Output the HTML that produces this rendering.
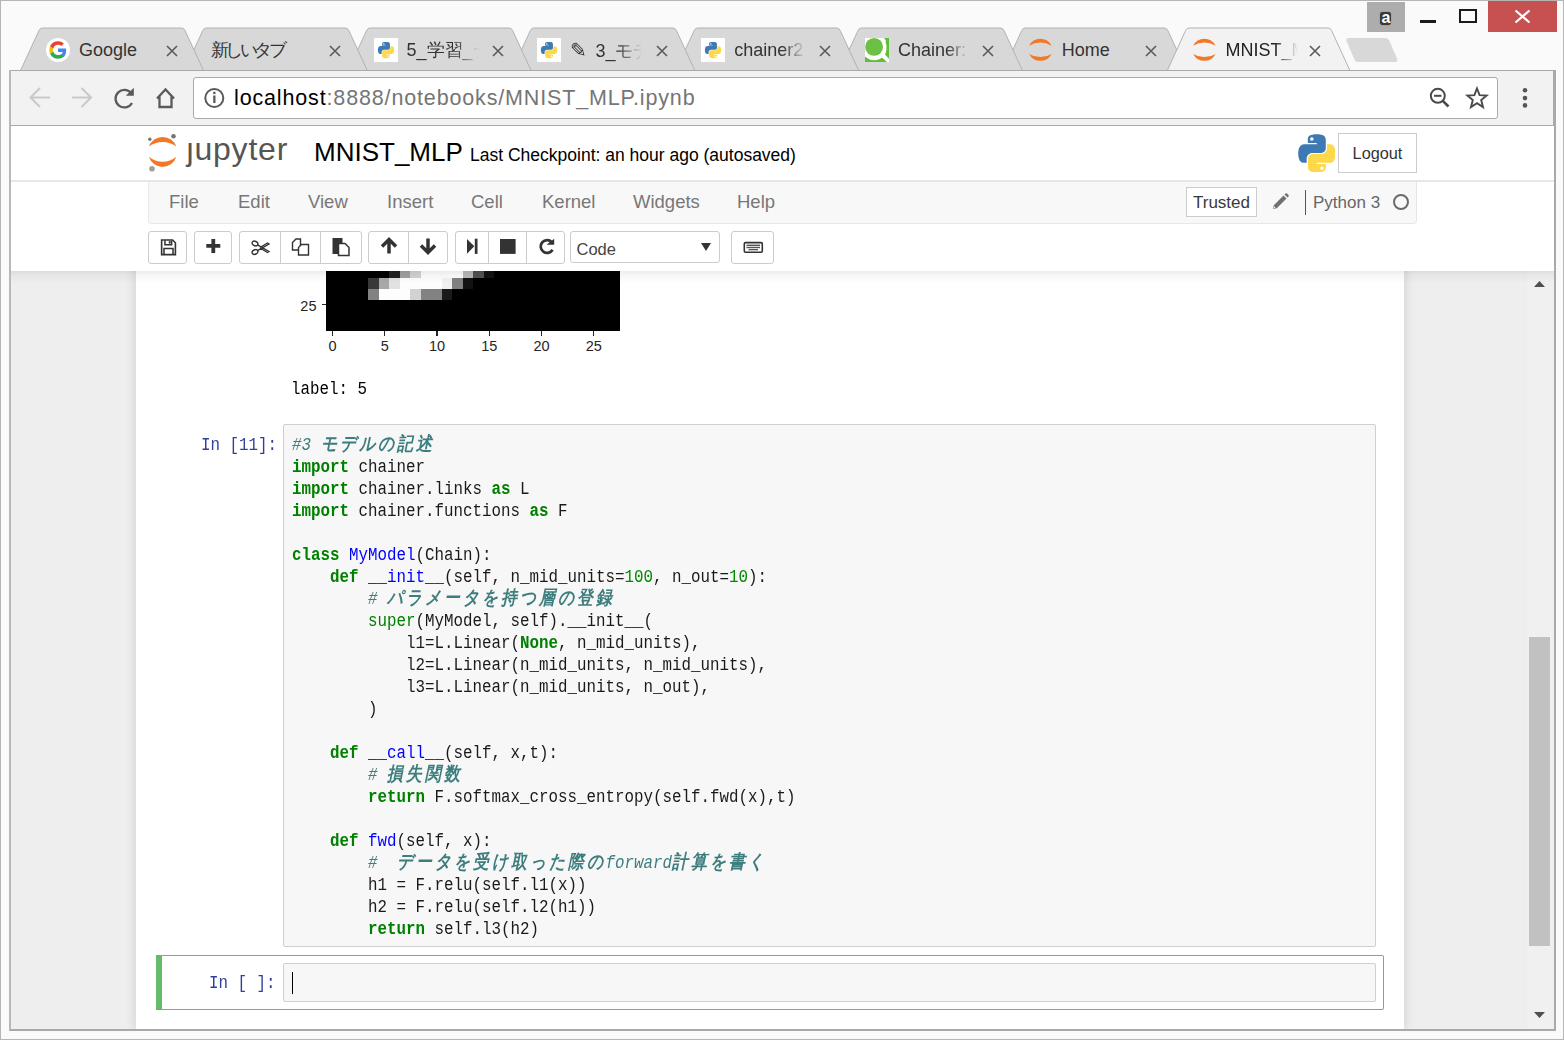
<!DOCTYPE html><html><head><meta charset="utf-8"><style>
*{box-sizing:border-box}
html,body{margin:0;padding:0}
body{width:1564px;height:1040px;overflow:hidden;position:relative;background:#fafafa;font-family:"Liberation Sans",sans-serif}
.abs{position:absolute}
.ttl{position:absolute;top:36px;height:28px;line-height:28px;font-size:18px;color:#333;white-space:nowrap;overflow:hidden}
.fade{-webkit-mask-image:linear-gradient(to right,#000 calc(100% - 24px),transparent 100%);mask-image:linear-gradient(to right,#000 calc(100% - 24px),transparent 100%)}
.fav{position:absolute;top:38px;width:24px;height:24px}
</style></head><body>
<div class="abs" style="left:1367px;top:2px;width:38px;height:30px;background:#adadad"></div>
<div class="abs" style="left:1379.5px;top:12px;width:11.5px;height:12.8px;background:#3a3a3a;border-radius:3px;box-shadow:0 0 1px #444"></div>
<div class="abs" style="left:1367px;top:2px;width:38px;height:30px;line-height:32px;text-align:center;color:#fff;font-size:16px;font-weight:bold">a</div>
<div class="abs" style="left:1420px;top:20px;width:16px;height:3px;background:#1a1a1a"></div>
<div class="abs" style="left:1459px;top:9px;width:18px;height:14px;border:2px solid #1a1a1a"></div>
<div class="abs" style="left:1488px;top:1px;width:69px;height:31px;background:#c75050"></div>
<svg class="abs" style="left:1488px;top:1px" width="69" height="31"><path d="M27.5 9.5 L41.5 21.5 M41.5 9.5 L27.5 21.5" stroke="#fff" stroke-width="2.2"/></svg>
<svg class="abs" style="left:0;top:0" width="1564" height="72"><path d="M1003.3000000000001 70.5 L1021.8000000000001 30.5 Q1022.8000000000001 28 1025.3000000000002 28 L1164.3000000000002 28 Q1166.8000000000002 28 1167.8000000000002 30.5 L1186.3000000000002 70.5Z" fill="#d8d8d8" stroke="#b2b2b2" stroke-width="1"/><path d="M839.5 70.5 L858.0 30.5 Q859.0 28 861.5 28 L1000.5 28 Q1003.0 28 1004.0 30.5 L1022.5 70.5Z" fill="#d8d8d8" stroke="#b2b2b2" stroke-width="1"/><path d="M675.7 70.5 L694.2 30.5 Q695.2 28 697.7 28 L836.7 28 Q839.2 28 840.2 30.5 L858.7 70.5Z" fill="#d8d8d8" stroke="#b2b2b2" stroke-width="1"/><path d="M511.9000000000001 70.5 L530.4000000000001 30.5 Q531.4000000000001 28 533.9000000000001 28 L672.9000000000001 28 Q675.4000000000001 28 676.4000000000001 30.5 L694.9000000000001 70.5Z" fill="#d8d8d8" stroke="#b2b2b2" stroke-width="1"/><path d="M348.1 70.5 L366.6 30.5 Q367.6 28 370.1 28 L509.1 28 Q511.6 28 512.6 30.5 L531.1 70.5Z" fill="#d8d8d8" stroke="#b2b2b2" stroke-width="1"/><path d="M184.3 70.5 L202.8 30.5 Q203.8 28 206.3 28 L345.3 28 Q347.8 28 348.8 30.5 L367.3 70.5Z" fill="#d8d8d8" stroke="#b2b2b2" stroke-width="1"/><path d="M20.5 70.5 L39.0 30.5 Q40.0 28 42.5 28 L181.5 28 Q184.0 28 185.0 30.5 L203.5 70.5Z" fill="#d8d8d8" stroke="#b2b2b2" stroke-width="1"/><path d="M1349 38 L1385 38 Q1388 38 1389.5 41 L1397 58.5 Q1398.5 62 1395 62 L1358 62 Q1355.5 62 1354.5 59.5 L1346.5 41 Q1345.5 38 1349 38Z" fill="#d8d8d8"/><path d="M1167.1000000000001 71 L1185.6000000000001 30.5 Q1186.6000000000001 28 1189.1000000000001 28 L1328.1000000000001 28 Q1330.6000000000001 28 1331.6000000000001 30.5 L1350.1000000000001 71" fill="#f2f2f2" stroke="#b2b2b2" stroke-width="1"/></svg>
<div class="fav" style="left:46.0px"><svg width="24" height="24" viewBox="0 0 24 24"><circle cx="12" cy="12" r="12" fill="#fff"/><g transform="translate(12 12) scale(1.45) translate(-12 -12)">
<path d="M17.6 12.2c0-.5 0-.9-.1-1.3H12v2.5h3.2c-.1.8-.6 1.5-1.2 1.9v1.6h2c1.1-1.1 1.6-2.7 1.6-4.7z" fill="#4285f4"/>
<path d="M12 18c1.6 0 3-.5 4-1.5l-2-1.6c-.5.4-1.2.6-2 .6-1.6 0-2.9-1-3.3-2.4H6.6v1.6C7.6 16.7 9.6 18 12 18z" fill="#34a853"/>
<path d="M8.7 13.1c-.1-.4-.2-.7-.2-1.1s.1-.8.2-1.1V9.3H6.6C6.2 10.1 6 11 6 12s.2 1.9.6 2.7l2.1-1.6z" fill="#fbbc05"/>
<path d="M12 8.4c.9 0 1.7.3 2.3.9l1.7-1.7C15 6.6 13.6 6 12 6 9.6 6 7.6 7.3 6.6 9.3l2.1 1.6c.4-1.4 1.7-2.5 3.3-2.5z" fill="#ea4335"/></g></svg></div>
<div class="ttl" style="left:79.0px;width:72.0px;color:#333">Google</div>
<div class="abs" style="left:166.00px;top:43px"><svg width="12" height="12" viewBox="0 0 12 12"><path d="M1 1 L11 11 M11 1 L1 11" stroke="#5a5a5a" stroke-width="1.6"/></svg></div>
<div class="ttl" style="left:210.8px;width:104.0px;color:#333"><span style="letter-spacing:-3.5px">新しいタブ</span></div>
<div class="abs" style="left:329.23px;top:43px"><svg width="12" height="12" viewBox="0 0 12 12"><path d="M1 1 L11 11 M11 1 L1 11" stroke="#5a5a5a" stroke-width="1.6"/></svg></div>
<div class="fav" style="left:373.6px"><svg width="24" height="24" viewBox="0 0 24 24"><rect width="24" height="24" fill="#fff"/><g transform="translate(3.8 3.8) scale(0.149)"><path d="M54.9 0.9c-4.6 0-9 .4-12.8 1.1C30.9 4 28.8 8.1 28.8 15.7v10h26.4v3.3H18.9c-7.7 0-14.4 4.6-16.5 13.3-2.4 10-2.5 16.3 0 26.7 1.9 7.8 6.3 13.3 14 13.3h9.1v-12c0-8.7 7.5-16.3 16.5-16.3h26.3c7.3 0 13.2-6 13.2-13.3V15.7c0-7.1-6-12.5-13.2-13.700C64 1.2 59.5.9 54.9.9zM40.6 9c2.7 0 5 2.3 5 5 0 2.7-2.3 5-5 5-2.8 0-5-2.2-5-5 0-2.8 2.2-5 5-5z" fill="#3d7ab3"/>
<path d="M85.1 29v11.7c0 9-7.7 16.6-16.5 16.6H42.3c-7.2 0-13.2 6.2-13.2 13.4v25c0 7.1 6.2 11.3 13.2 13.4 8.3 2.4 16.3 2.9 26.3 0 6.6-1.9 13.2-5.8 13.2-13.400v-10H55.3v-3.3h39.6c7.7 0 10.5-5.300 13.2-13.300 2.8-8.2 2.7-16.1 0-26.7-1.9-7.6-5.5-13.3-13.2-13.3H85.1zM70.3 92.5c2.7 0 5 2.2 5 5 0 2.8-2.3 5-5 5-2.8 0-5-2.3-5-5 0-2.8 2.2-5 5-5z" fill="#fdd84a"/></g></svg></div>
<div class="ttl fade" style="left:406.6px;width:72.0px;color:#333">5_学習_データ</div>
<div class="abs" style="left:492.46px;top:43px"><svg width="12" height="12" viewBox="0 0 12 12"><path d="M1 1 L11 11 M11 1 L1 11" stroke="#5a5a5a" stroke-width="1.6"/></svg></div>
<div class="fav" style="left:537.4000000000001px"><svg width="24" height="24" viewBox="0 0 24 24"><rect width="24" height="24" fill="#fff"/><g transform="translate(3.8 3.8) scale(0.149)"><path d="M54.9 0.9c-4.6 0-9 .4-12.8 1.1C30.9 4 28.8 8.1 28.8 15.7v10h26.4v3.3H18.9c-7.7 0-14.4 4.6-16.5 13.3-2.4 10-2.5 16.3 0 26.7 1.9 7.8 6.3 13.3 14 13.3h9.1v-12c0-8.7 7.5-16.3 16.5-16.3h26.3c7.3 0 13.2-6 13.2-13.3V15.7c0-7.1-6-12.5-13.2-13.700C64 1.2 59.5.9 54.9.9zM40.6 9c2.7 0 5 2.3 5 5 0 2.7-2.3 5-5 5-2.8 0-5-2.2-5-5 0-2.8 2.2-5 5-5z" fill="#3d7ab3"/>
<path d="M85.1 29v11.7c0 9-7.7 16.6-16.5 16.6H42.3c-7.2 0-13.2 6.2-13.2 13.4v25c0 7.1 6.2 11.3 13.2 13.4 8.3 2.4 16.3 2.9 26.3 0 6.6-1.9 13.2-5.8 13.2-13.400v-10H55.3v-3.3h39.6c7.7 0 10.5-5.300 13.2-13.300 2.8-8.2 2.7-16.1 0-26.7-1.9-7.6-5.5-13.3-13.2-13.3H85.1zM70.3 92.5c2.7 0 5 2.2 5 5 0 2.8-2.3 5-5 5-2.8 0-5-2.3-5-5 0-2.8 2.2-5 5-5z" fill="#fdd84a"/></g></svg></div>
<div class="ttl fade" style="left:570.4000000000001px;width:72.0px;color:#333"><span style="font-size:20px;margin-right:3px">✎</span> 3_モデル</div>
<div class="abs" style="left:655.69px;top:43px"><svg width="12" height="12" viewBox="0 0 12 12"><path d="M1 1 L11 11 M11 1 L1 11" stroke="#5a5a5a" stroke-width="1.6"/></svg></div>
<div class="fav" style="left:701.2px"><svg width="24" height="24" viewBox="0 0 24 24"><rect width="24" height="24" fill="#fff"/><g transform="translate(3.8 3.8) scale(0.149)"><path d="M54.9 0.9c-4.6 0-9 .4-12.8 1.1C30.9 4 28.8 8.1 28.8 15.7v10h26.4v3.3H18.9c-7.7 0-14.4 4.6-16.5 13.3-2.4 10-2.5 16.3 0 26.7 1.9 7.8 6.3 13.3 14 13.3h9.1v-12c0-8.7 7.5-16.3 16.5-16.3h26.3c7.3 0 13.2-6 13.2-13.3V15.7c0-7.1-6-12.5-13.2-13.700C64 1.2 59.5.9 54.9.9zM40.6 9c2.7 0 5 2.3 5 5 0 2.7-2.3 5-5 5-2.8 0-5-2.2-5-5 0-2.8 2.2-5 5-5z" fill="#3d7ab3"/>
<path d="M85.1 29v11.7c0 9-7.7 16.6-16.5 16.6H42.3c-7.2 0-13.2 6.2-13.2 13.4v25c0 7.1 6.2 11.3 13.2 13.4 8.3 2.4 16.3 2.9 26.3 0 6.6-1.9 13.2-5.8 13.2-13.400v-10H55.3v-3.3h39.6c7.7 0 10.5-5.300 13.2-13.300 2.8-8.2 2.7-16.1 0-26.7-1.9-7.6-5.5-13.3-13.2-13.3H85.1zM70.3 92.5c2.7 0 5 2.2 5 5 0 2.8-2.3 5-5 5-2.8 0-5-2.3-5-5 0-2.8 2.2-5 5-5z" fill="#fdd84a"/></g></svg></div>
<div class="ttl fade" style="left:734.2px;width:72.0px;color:#333">chainer2</div>
<div class="abs" style="left:818.92px;top:43px"><svg width="12" height="12" viewBox="0 0 12 12"><path d="M1 1 L11 11 M11 1 L1 11" stroke="#5a5a5a" stroke-width="1.6"/></svg></div>
<div class="fav" style="left:865.0px"><svg width="24" height="24" viewBox="0 0 24 24"><defs><clipPath id="qc"><rect width="24" height="24"/></clipPath></defs><g clip-path="url(#qc)"><rect width="24" height="24" fill="#64bd38"/>
<circle cx="9.1" cy="8.9" r="13.3" fill="#fff"/><circle cx="9.1" cy="8.9" r="8.9" fill="#6cc044"/><path d="M16 18.5 L24 26 L26.5 23.5 L19 15.5Z" fill="#fff"/><path d="M20.5 4 Q22.5 9 20.5 16 L24 20 V0Z" fill="#64bd38"/></g></svg></div>
<div class="ttl fade" style="left:898.0px;width:72.0px;color:#333">Chainer: </div>
<div class="abs" style="left:982.15px;top:43px"><svg width="12" height="12" viewBox="0 0 12 12"><path d="M1 1 L11 11 M11 1 L1 11" stroke="#5a5a5a" stroke-width="1.6"/></svg></div>
<div class="fav" style="left:1028.8000000000002px"><svg width="24" height="24" viewBox="0 0 24 24">
<path d="M0.2 7.7 A12.4 12.4 0 0 1 22.5 7.7 A21 21 0 0 0 0.2 7.7Z" fill="#f37726"/>
<path d="M0.2 15.9 A12.4 12.4 0 0 0 22.5 15.9 A21 21 0 0 1 0.2 15.9Z" fill="#f37726"/></svg></div>
<div class="ttl" style="left:1061.8000000000002px;width:72.0px;color:#333">Home</div>
<div class="abs" style="left:1145.38px;top:43px"><svg width="12" height="12" viewBox="0 0 12 12"><path d="M1 1 L11 11 M11 1 L1 11" stroke="#5a5a5a" stroke-width="1.6"/></svg></div>
<div class="fav" style="left:1192.6000000000001px"><svg width="24" height="24" viewBox="0 0 24 24">
<path d="M0.2 7.7 A12.4 12.4 0 0 1 22.5 7.7 A21 21 0 0 0 0.2 7.7Z" fill="#f37726"/>
<path d="M0.2 15.9 A12.4 12.4 0 0 0 22.5 15.9 A21 21 0 0 1 0.2 15.9Z" fill="#f37726"/></svg></div>
<div class="ttl fade" style="left:1225.6000000000001px;width:72.0px;color:#222">MNIST_MLP</div>
<div class="abs" style="left:1308.61px;top:43px"><svg width="12" height="12" viewBox="0 0 12 12"><path d="M1 1 L11 11 M11 1 L1 11" stroke="#5a5a5a" stroke-width="1.6"/></svg></div>
<div class="abs" style="left:10px;top:70px;width:1546px;height:56px;background:#f2f2f2;border-top:1px solid #a9a9a9"></div>
<div class="abs" style="left:9px;top:70px;width:2px;height:961px;background:#b8b8b8"></div>
<div class="abs" style="left:1553px;top:70px;width:3px;height:961px;background:#a9a9a9"></div>
<div class="abs" style="left:193px;top:77px;width:1305px;height:42px;background:#fff;border:1px solid #a9a9a9;border-radius:3px"></div>
<div class="abs" style="left:234px;top:83px;height:30px;line-height:30px;font-size:21.5px;letter-spacing:0.85px;color:#757575;white-space:nowrap"><span style="color:#000">localhost</span>:8888/notebooks/MNIST_MLP.ipynb</div>
<svg class="abs" style="left:0;top:70px" width="1564" height="56">
<g fill="none" stroke="#c9c9c9" stroke-width="2"><path d="M31 27.5 H50 M40 18 L30.5 27.5 L40 37"/><path d="M72 27.5 H91 M81.5 18 L91 27.5 L81.5 37"/></g>
<g fill="none" stroke="#5a5a5a" stroke-width="2.3"><path d="M131.5 23.5 A8.8 8.8 0 1 0 132 33"/></g>
<path d="M125.8 25.8 L133.8 25.8 L133.8 17.8Z" fill="#5a5a5a"/>
<g fill="none" stroke="#5a5a5a" stroke-width="2.3" stroke-linejoin="miter"><path d="M157 28.5 L165.5 19.5 L174 28.5 M159.5 26.5 V37 H171.5 V26.5"/></g>
<circle cx="214.3" cy="28" r="9" fill="none" stroke="#5a5a5a" stroke-width="2"/>
<rect x="213.2" y="25.5" width="2.3" height="7.5" fill="#5a5a5a"/><rect x="213.2" y="21.8" width="2.3" height="2.3" fill="#5a5a5a"/>
<circle cx="1437.8" cy="25.8" r="7" fill="none" stroke="#4a4a4a" stroke-width="2"/><path d="M1434 25.8 H1441.5" stroke="#4a4a4a" stroke-width="2"/><path d="M1442.8 30.8 L1448.5 36.5" stroke="#4a4a4a" stroke-width="2.6"/>
<path d="M1477 18.5 L1479.6 25.2 L1486.6 25.6 L1481.2 30.1 L1483 37 L1477 33.1 L1471 37 L1472.8 30.1 L1467.4 25.6 L1474.4 25.2Z" fill="none" stroke="#4a4a4a" stroke-width="1.9" stroke-linejoin="miter"/>
<circle cx="1525" cy="20.3" r="2.3" fill="#555"/><circle cx="1525" cy="28.1" r="2.3" fill="#555"/><circle cx="1525" cy="35.4" r="2.3" fill="#555"/>
</svg>
<div class="abs" style="left:11px;top:125px;width:1542px;height:1px;background:#a9a9a9"></div>
<div class="abs" style="left:11px;top:126px;width:1516px;height:903px;background:#eee"></div>
<div class="abs" style="left:136px;top:126px;width:1268px;height:903px;background:#fff;box-shadow:0 0 10px 1px rgba(0,0,0,0.12);clip-path:inset(0 -20px 0 -20px)"></div>
<div class="abs" style="left:0;top:0;z-index:5">
<div class="abs" style="left:11px;top:271px;width:1543px;height:13px;background:linear-gradient(rgba(0,0,0,0.075),rgba(0,0,0,0.03) 35%,rgba(0,0,0,0))"></div>
<div class="abs" style="left:11px;top:126px;width:1543px;height:145px;background:#fff"></div>
<svg class="abs" style="left:145px;top:132px" width="36" height="40" viewBox="0 0 36 40">
<path d="M3.9 14.5 A14.6 14.6 0 0 1 31.3 14.5 A23.1 23.1 0 0 0 3.9 14.5Z" fill="#f37726"/>
<path d="M3.9 24.7 A14.3 14.3 0 0 0 31.3 24.7 A21.3 21.3 0 0 1 3.9 24.7Z" fill="#f37726"/>
<circle cx="28.5" cy="4.2" r="2.3" fill="#767677"/><circle cx="4.8" cy="7.2" r="1.7" fill="#767677"/><circle cx="7" cy="36.8" r="2.8" fill="#9e9e9e"/>
</svg>
<div class="abs" style="left:186.5px;top:126.5px;height:44px;line-height:44px;font-size:32px;color:#555;letter-spacing:0.8px;white-space:nowrap">ȷupyter</div>
<div class="abs" style="left:314px;top:136px;height:32px;line-height:32px;font-size:26px;color:#000;white-space:nowrap">MNIST_MLP</div>
<div class="abs" style="left:470px;top:144px;height:22px;line-height:22px;font-size:17.5px;color:#000;white-space:nowrap">Last Checkpoint: an hour ago (autosaved)</div>
<div class="abs" style="left:1297.5px;top:133.5px;width:37.5px;height:38.5px"><svg width="37.5" height="38.5" viewBox="0 0 110 110" preserveAspectRatio="none"><path d="M54.9 0.9c-4.6 0-9 .4-12.8 1.1C30.9 4 28.8 8.1 28.8 15.7v10h26.4v3.3H18.9c-7.7 0-14.4 4.6-16.5 13.3-2.4 10-2.5 16.3 0 26.7 1.9 7.8 6.3 13.3 14 13.3h9.1v-12c0-8.7 7.5-16.3 16.5-16.3h26.3c7.3 0 13.2-6 13.2-13.3V15.7c0-7.1-6-12.5-13.2-13.700C64 1.2 59.5.9 54.9.9zM40.6 9c2.7 0 5 2.3 5 5 0 2.7-2.3 5-5 5-2.8 0-5-2.2-5-5 0-2.8 2.2-5 5-5z" fill="#3d7ab3"/>
<path d="M85.1 29v11.7c0 9-7.7 16.6-16.5 16.6H42.3c-7.2 0-13.2 6.2-13.2 13.4v25c0 7.1 6.2 11.3 13.2 13.4 8.3 2.4 16.3 2.9 26.3 0 6.6-1.9 13.2-5.8 13.2-13.400v-10H55.3v-3.3h39.6c7.7 0 10.5-5.300 13.2-13.300 2.8-8.2 2.7-16.1 0-26.7-1.9-7.6-5.5-13.3-13.2-13.3H85.1zM70.3 92.5c2.7 0 5 2.2 5 5 0 2.8-2.3 5-5 5-2.8 0-5-2.3-5-5 0-2.8 2.2-5 5-5z" fill="#fdd84a"/></svg></div>
<div class="abs" style="left:1338px;top:133px;width:79px;height:40px;border:1px solid #ccc;background:#fff;font-size:16.3px;color:#333;line-height:38px;text-align:center">Logout</div>
<div class="abs" style="left:11px;top:180px;width:1543px;height:2px;background:#e7e7e7"></div>
<div class="abs" style="left:148px;top:182px;width:1269px;height:42px;background:#f8f8f8;border:1px solid #e7e7e7;border-top:none;border-radius:0 0 4px 4px"></div>
<div class="abs" style="left:169px;top:190px;height:24px;line-height:24px;font-size:18.5px;color:#777;white-space:nowrap">File</div>
<div class="abs" style="left:238px;top:190px;height:24px;line-height:24px;font-size:18.5px;color:#777;white-space:nowrap">Edit</div>
<div class="abs" style="left:308px;top:190px;height:24px;line-height:24px;font-size:18.5px;color:#777;white-space:nowrap">View</div>
<div class="abs" style="left:387px;top:190px;height:24px;line-height:24px;font-size:18.5px;color:#777;white-space:nowrap">Insert</div>
<div class="abs" style="left:471px;top:190px;height:24px;line-height:24px;font-size:18.5px;color:#777;white-space:nowrap">Cell</div>
<div class="abs" style="left:542px;top:190px;height:24px;line-height:24px;font-size:18.5px;color:#777;white-space:nowrap">Kernel</div>
<div class="abs" style="left:633px;top:190px;height:24px;line-height:24px;font-size:18.5px;color:#777;white-space:nowrap">Widgets</div>
<div class="abs" style="left:737px;top:190px;height:24px;line-height:24px;font-size:18.5px;color:#777;white-space:nowrap">Help</div>
<div class="abs" style="left:1186px;top:187px;width:71px;height:30px;border:1px solid #ccc;background:#fff;font-size:17px;color:#3a3a3a;line-height:30px;text-align:center">Trusted</div>
<svg class="abs" style="left:1270px;top:192px" width="20" height="20" viewBox="0 0 20 20"><path d="M3 17 L3.8 13.2 L13.5 3.5 L16.5 6.5 L6.8 16.2Z M14.5 2.5 L15.5 1.5 Q16.2 0.8 17 1.5 L18.5 3 Q19.2 3.8 18.5 4.5 L17.5 5.5Z" fill="#707070"/><path d="M3.5 16.5 L4 14.3 L5.7 16Z" fill="#f8f8f8"/></svg>
<div class="abs" style="left:1305px;top:190px;width:1px;height:25px;background:#555"></div>
<div class="abs" style="left:1313px;top:191px;height:24px;line-height:24px;font-size:17px;color:#666;white-space:nowrap">Python 3</div>
<div class="abs" style="left:1393px;top:194px;width:16px;height:16px;border:2.2px solid #6a6a6a;border-radius:50%"></div>
<div class="abs" style="left:148px;top:231px;width:39px;height:33px;border:1px solid #ccc;border-radius:3px;background:#fff"></div>
<div class="abs" style="left:194px;top:231px;width:38px;height:33px;border:1px solid #ccc;border-radius:3px;background:#fff"></div>
<div class="abs" style="left:239px;top:231px;width:123px;height:33px;border:1px solid #ccc;border-radius:3px;background:#fff"></div>
<div class="abs" style="left:368px;top:231px;width:80px;height:33px;border:1px solid #ccc;border-radius:3px;background:#fff"></div>
<div class="abs" style="left:455px;top:231px;width:110px;height:33px;border:1px solid #ccc;border-radius:3px;background:#fff"></div>
<div class="abs" style="left:280px;top:232px;width:1px;height:31px;background:#ccc"></div>
<div class="abs" style="left:320px;top:232px;width:1px;height:31px;background:#ccc"></div>
<div class="abs" style="left:408px;top:232px;width:1px;height:31px;background:#ccc"></div>
<div class="abs" style="left:488px;top:232px;width:1px;height:31px;background:#ccc"></div>
<div class="abs" style="left:526px;top:232px;width:1px;height:31px;background:#ccc"></div>
<div class="abs" style="left:570px;top:231px;width:150px;height:32px;border:1px solid #ccc;border-radius:3px;background:#fff"></div>
<div class="abs" style="left:731px;top:231px;width:43px;height:33px;border:1px solid #ccc;border-radius:3px;background:#fff"></div>
<div class="abs" style="left:576.5px;top:238px;height:22px;line-height:22px;font-size:16.5px;color:#444">Code</div>
<svg class="abs" style="left:700px;top:242px" width="12" height="10"><path d="M1 1 H11 L6 9Z" fill="#333"/></svg>
<svg class="abs" style="left:0;top:230px" width="800" height="34">
<g transform="translate(160.2 9) scale(0.95)"><path d="M1.5 1 H13 L16 4 V16.5 H1.5Z" fill="none" stroke="#333" stroke-width="1.7"/><path d="M5 1.5 V6 H12 V1.5" fill="none" stroke="#333" stroke-width="1.6"/><rect x="9" y="2.3" width="2" height="2.5" fill="#333"/><path d="M4 16 V10 H13.5 V16" fill="none" stroke="#333" stroke-width="1.6"/></g>
<path d="M206.3 15.9 H220.3 M213.3 8.9 V22.9" stroke="#333" stroke-width="3.8"/>
<g transform="translate(251 9)" fill="none" stroke="#333" stroke-width="1.4"><ellipse cx="4" cy="4.5" rx="3" ry="2.2" transform="rotate(25 4 4.5)"/><ellipse cx="4" cy="13" rx="3" ry="2.2" transform="rotate(-25 4 13)"/><path d="M6.5 5.8 L18 12.5 L16.5 13.5 L9 9 M6.5 11.7 L18 5 L16.5 4 L9 8.5"/></g>
<g transform="translate(291.5 8)" fill="#fff" stroke="#333" stroke-width="1.4"><path d="M1 12 V4.5 L4.5 1 H9 V12Z"/><path d="M7 17 V9.5 L10 6.5 H17 V17Z"/></g>
<g transform="translate(331.5 7.5)"><path d="M1 0.5 H11 V16.5 H1Z" fill="#333"/><path d="M7 6 H13.5 L17.5 10 V18 H7Z" fill="#fff" stroke="#333" stroke-width="1.5"/></g>
<path d="M382 16.5 L389 9.5 L396 16.5 M389 10 V23.5" fill="none" stroke="#333" stroke-width="3.5" stroke-linejoin="miter"/>
<path d="M421 15.5 L428 22.5 L435 15.5 M428 22 V8.5" fill="none" stroke="#333" stroke-width="3.5" stroke-linejoin="miter"/>
<path d="M467 9 L474.3 16.3 L467 23.8Z" fill="#333"/><rect x="474.8" y="8.7" width="2.7" height="15.2" fill="#333"/>
<rect x="500" y="9" width="15.6" height="14.9" fill="#333"/>
<path d="M551.8 12.2 A6.4 6.4 0 1 0 552.6 19.8" fill="none" stroke="#333" stroke-width="2.7"/><path d="M546.5 14.8 L554.2 14.8 L554.2 8.8Z" fill="#333"/>
<g transform="translate(743.5 11.8)"><rect x="0.8" y="0.8" width="18" height="9.6" rx="1.2" fill="none" stroke="#333" stroke-width="1.6"/>
<g fill="#555"><rect x="3" y="2.8" width="13.5" height="1.4"/><rect x="3" y="5" width="13.5" height="1.4"/><rect x="5" y="7.2" width="9.5" height="1.3"/></g></g>
</svg>
</div>
<div class="abs" style="left:326px;top:255px;width:294px;height:76px;background:#000"></div>
<div class="abs" style="left:389.0px;top:262px;width:10.5px;height:15.5px;background:rgb(34,34,34)"></div>
<div class="abs" style="left:399.5px;top:262px;width:10.5px;height:15.5px;background:rgb(160,160,160)"></div>
<div class="abs" style="left:410.0px;top:262px;width:10.5px;height:15.5px;background:rgb(210,210,210)"></div>
<div class="abs" style="left:420.5px;top:262px;width:10.5px;height:15.5px;background:rgb(253,253,253)"></div>
<div class="abs" style="left:431.0px;top:262px;width:10.5px;height:15.5px;background:rgb(253,253,253)"></div>
<div class="abs" style="left:441.5px;top:262px;width:10.5px;height:15.5px;background:rgb(253,253,253)"></div>
<div class="abs" style="left:452.0px;top:262px;width:10.5px;height:15.5px;background:rgb(253,253,253)"></div>
<div class="abs" style="left:462.5px;top:262px;width:10.5px;height:15.5px;background:rgb(184,184,184)"></div>
<div class="abs" style="left:473.0px;top:262px;width:10.5px;height:15.5px;background:rgb(82,82,82)"></div>
<div class="abs" style="left:483.5px;top:262px;width:10.5px;height:15.5px;background:rgb(18,18,18)"></div>
<div class="abs" style="left:368.0px;top:277.5px;width:10.5px;height:11.0px;background:rgb(56,56,56)"></div>
<div class="abs" style="left:378.5px;top:277.5px;width:10.5px;height:11.0px;background:rgb(168,168,168)"></div>
<div class="abs" style="left:389.0px;top:277.5px;width:10.5px;height:11.0px;background:rgb(226,226,226)"></div>
<div class="abs" style="left:399.5px;top:277.5px;width:10.5px;height:11.0px;background:rgb(253,253,253)"></div>
<div class="abs" style="left:410.0px;top:277.5px;width:10.5px;height:11.0px;background:rgb(253,253,253)"></div>
<div class="abs" style="left:420.5px;top:277.5px;width:10.5px;height:11.0px;background:rgb(253,253,253)"></div>
<div class="abs" style="left:431.0px;top:277.5px;width:10.5px;height:11.0px;background:rgb(253,253,253)"></div>
<div class="abs" style="left:441.5px;top:277.5px;width:10.5px;height:11.0px;background:rgb(240,240,240)"></div>
<div class="abs" style="left:452.0px;top:277.5px;width:10.5px;height:11.0px;background:rgb(128,128,128)"></div>
<div class="abs" style="left:462.5px;top:277.5px;width:10.5px;height:11.0px;background:rgb(18,18,18)"></div>
<div class="abs" style="left:368.0px;top:288.5px;width:10.5px;height:11.0px;background:rgb(130,130,130)"></div>
<div class="abs" style="left:378.5px;top:288.5px;width:10.5px;height:11.0px;background:rgb(253,253,253)"></div>
<div class="abs" style="left:389.0px;top:288.5px;width:10.5px;height:11.0px;background:rgb(253,253,253)"></div>
<div class="abs" style="left:399.5px;top:288.5px;width:10.5px;height:11.0px;background:rgb(253,253,253)"></div>
<div class="abs" style="left:410.0px;top:288.5px;width:10.5px;height:11.0px;background:rgb(210,210,210)"></div>
<div class="abs" style="left:420.5px;top:288.5px;width:10.5px;height:11.0px;background:rgb(130,130,130)"></div>
<div class="abs" style="left:431.0px;top:288.5px;width:10.5px;height:11.0px;background:rgb(130,130,130)"></div>
<div class="abs" style="left:441.5px;top:288.5px;width:10.5px;height:11.0px;background:rgb(26,26,26)"></div>
<div class="abs" style="left:331.90px;top:331px;width:1.2px;height:5px;background:#262626"></div>
<div class="abs" style="left:312.50px;top:338px;width:40px;text-align:center;height:16px;line-height:16px;font-size:14.5px;color:#262626">0</div>
<div class="abs" style="left:384.16px;top:331px;width:1.2px;height:5px;background:#262626"></div>
<div class="abs" style="left:364.76px;top:338px;width:40px;text-align:center;height:16px;line-height:16px;font-size:14.5px;color:#262626">5</div>
<div class="abs" style="left:436.42px;top:331px;width:1.2px;height:5px;background:#262626"></div>
<div class="abs" style="left:417.02px;top:338px;width:40px;text-align:center;height:16px;line-height:16px;font-size:14.5px;color:#262626">10</div>
<div class="abs" style="left:488.68px;top:331px;width:1.2px;height:5px;background:#262626"></div>
<div class="abs" style="left:469.28px;top:338px;width:40px;text-align:center;height:16px;line-height:16px;font-size:14.5px;color:#262626">15</div>
<div class="abs" style="left:540.94px;top:331px;width:1.2px;height:5px;background:#262626"></div>
<div class="abs" style="left:521.54px;top:338px;width:40px;text-align:center;height:16px;line-height:16px;font-size:14.5px;color:#262626">20</div>
<div class="abs" style="left:593.20px;top:331px;width:1.2px;height:5px;background:#262626"></div>
<div class="abs" style="left:573.80px;top:338px;width:40px;text-align:center;height:16px;line-height:16px;font-size:14.5px;color:#262626">25</div>
<div class="abs" style="left:321.5px;top:303.6px;width:4.5px;height:1.2px;background:#262626"></div>
<div class="abs" style="left:278px;top:297.5px;width:38.5px;text-align:right;height:16px;line-height:16px;font-size:14.5px;color:#262626">25</div>
<div class="abs" style="left:283px;top:424px;width:1093px;height:523px;background:#f7f7f7;border:1px solid #cfcfcf;border-radius:2px"></div>
<div style="position:absolute;white-space:pre;font-family:'Liberation Mono',monospace;font-size:19px;line-height:22px;height:22px;transform:scaleX(0.8333);transform-origin:0 0;left:201px;top:433.5px;color:#303f9f">In [11]:</div>
<div style="position:absolute;white-space:pre;font-family:'Liberation Mono',monospace;font-size:19px;line-height:22px;height:22px;transform:scaleX(0.8333);transform-origin:0 0;left:291.5px;top:433.5px"><span style="color:#3d7d7d;font-style:italic">#3 <span style="letter-spacing:3.8px;font-weight:bold">モデルの記述</span></span></div>
<div style="position:absolute;white-space:pre;font-family:'Liberation Mono',monospace;font-size:19px;line-height:22px;height:22px;transform:scaleX(0.8333);transform-origin:0 0;left:291.5px;top:455.5px"><span style="color:#008000;font-weight:bold">import</span><span style="color:#1a1a1a"> chainer</span></div>
<div style="position:absolute;white-space:pre;font-family:'Liberation Mono',monospace;font-size:19px;line-height:22px;height:22px;transform:scaleX(0.8333);transform-origin:0 0;left:291.5px;top:477.5px"><span style="color:#008000;font-weight:bold">import</span><span style="color:#1a1a1a"> chainer.links </span><span style="color:#008000;font-weight:bold">as</span><span style="color:#1a1a1a"> L</span></div>
<div style="position:absolute;white-space:pre;font-family:'Liberation Mono',monospace;font-size:19px;line-height:22px;height:22px;transform:scaleX(0.8333);transform-origin:0 0;left:291.5px;top:499.5px"><span style="color:#008000;font-weight:bold">import</span><span style="color:#1a1a1a"> chainer.functions </span><span style="color:#008000;font-weight:bold">as</span><span style="color:#1a1a1a"> F</span></div>
<div style="position:absolute;white-space:pre;font-family:'Liberation Mono',monospace;font-size:19px;line-height:22px;height:22px;transform:scaleX(0.8333);transform-origin:0 0;left:291.5px;top:543.5px"><span style="color:#008000;font-weight:bold">class</span><span style="color:#1a1a1a"> </span><span style="color:#0000ff">MyModel</span><span style="color:#1a1a1a">(Chain):</span></div>
<div style="position:absolute;white-space:pre;font-family:'Liberation Mono',monospace;font-size:19px;line-height:22px;height:22px;transform:scaleX(0.8333);transform-origin:0 0;left:291.5px;top:565.5px"><span style="color:#1a1a1a">    </span><span style="color:#008000;font-weight:bold">def</span><span style="color:#1a1a1a"> </span><span style="color:#0000ff">__init__</span><span style="color:#1a1a1a">(self, n_mid_units=</span><span style="color:#008800">100</span><span style="color:#1a1a1a">, n_out=</span><span style="color:#008800">10</span><span style="color:#1a1a1a">):</span></div>
<div style="position:absolute;white-space:pre;font-family:'Liberation Mono',monospace;font-size:19px;line-height:22px;height:22px;transform:scaleX(0.8333);transform-origin:0 0;left:291.5px;top:587.5px"><span style="color:#1a1a1a">        </span><span style="color:#3d7d7d;font-style:italic"># <span style="letter-spacing:3.8px;font-weight:bold">パラメータを持つ層の登録</span></span></div>
<div style="position:absolute;white-space:pre;font-family:'Liberation Mono',monospace;font-size:19px;line-height:22px;height:22px;transform:scaleX(0.8333);transform-origin:0 0;left:291.5px;top:609.5px"><span style="color:#1a1a1a">        </span><span style="color:#008000">super</span><span style="color:#1a1a1a">(MyModel, self).__init__(</span></div>
<div style="position:absolute;white-space:pre;font-family:'Liberation Mono',monospace;font-size:19px;line-height:22px;height:22px;transform:scaleX(0.8333);transform-origin:0 0;left:291.5px;top:631.5px"><span style="color:#1a1a1a">            l1=L.Linear(</span><span style="color:#008000;font-weight:bold">None</span><span style="color:#1a1a1a">, n_mid_units),</span></div>
<div style="position:absolute;white-space:pre;font-family:'Liberation Mono',monospace;font-size:19px;line-height:22px;height:22px;transform:scaleX(0.8333);transform-origin:0 0;left:291.5px;top:653.5px"><span style="color:#1a1a1a">            l2=L.Linear(n_mid_units, n_mid_units),</span></div>
<div style="position:absolute;white-space:pre;font-family:'Liberation Mono',monospace;font-size:19px;line-height:22px;height:22px;transform:scaleX(0.8333);transform-origin:0 0;left:291.5px;top:675.5px"><span style="color:#1a1a1a">            l3=L.Linear(n_mid_units, n_out),</span></div>
<div style="position:absolute;white-space:pre;font-family:'Liberation Mono',monospace;font-size:19px;line-height:22px;height:22px;transform:scaleX(0.8333);transform-origin:0 0;left:291.5px;top:697.5px"><span style="color:#1a1a1a">        )</span></div>
<div style="position:absolute;white-space:pre;font-family:'Liberation Mono',monospace;font-size:19px;line-height:22px;height:22px;transform:scaleX(0.8333);transform-origin:0 0;left:291.5px;top:741.5px"><span style="color:#1a1a1a">    </span><span style="color:#008000;font-weight:bold">def</span><span style="color:#1a1a1a"> </span><span style="color:#0000ff">__call__</span><span style="color:#1a1a1a">(self, x,t):</span></div>
<div style="position:absolute;white-space:pre;font-family:'Liberation Mono',monospace;font-size:19px;line-height:22px;height:22px;transform:scaleX(0.8333);transform-origin:0 0;left:291.5px;top:763.5px"><span style="color:#1a1a1a">        </span><span style="color:#3d7d7d;font-style:italic"># <span style="letter-spacing:3.8px;font-weight:bold">損失関数</span></span></div>
<div style="position:absolute;white-space:pre;font-family:'Liberation Mono',monospace;font-size:19px;line-height:22px;height:22px;transform:scaleX(0.8333);transform-origin:0 0;left:291.5px;top:785.5px"><span style="color:#1a1a1a">        </span><span style="color:#008000;font-weight:bold">return</span><span style="color:#1a1a1a"> F.softmax_cross_entropy(self.fwd(x),t)</span></div>
<div style="position:absolute;white-space:pre;font-family:'Liberation Mono',monospace;font-size:19px;line-height:22px;height:22px;transform:scaleX(0.8333);transform-origin:0 0;left:291.5px;top:829.5px"><span style="color:#1a1a1a">    </span><span style="color:#008000;font-weight:bold">def</span><span style="color:#1a1a1a"> </span><span style="color:#0000ff">fwd</span><span style="color:#1a1a1a">(self, x):</span></div>
<div style="position:absolute;white-space:pre;font-family:'Liberation Mono',monospace;font-size:19px;line-height:22px;height:22px;transform:scaleX(0.8333);transform-origin:0 0;left:291.5px;top:851.5px"><span style="color:#1a1a1a">        </span><span style="color:#3d7d7d;font-style:italic">#  <span style="letter-spacing:3.8px;font-weight:bold">データを受け取った際の</span>forward<span style="letter-spacing:3.8px;font-weight:bold">計算を書く</span></span></div>
<div style="position:absolute;white-space:pre;font-family:'Liberation Mono',monospace;font-size:19px;line-height:22px;height:22px;transform:scaleX(0.8333);transform-origin:0 0;left:291.5px;top:873.5px"><span style="color:#1a1a1a">        h1 = F.relu(self.l1(x))</span></div>
<div style="position:absolute;white-space:pre;font-family:'Liberation Mono',monospace;font-size:19px;line-height:22px;height:22px;transform:scaleX(0.8333);transform-origin:0 0;left:291.5px;top:895.5px"><span style="color:#1a1a1a">        h2 = F.relu(self.l2(h1))</span></div>
<div style="position:absolute;white-space:pre;font-family:'Liberation Mono',monospace;font-size:19px;line-height:22px;height:22px;transform:scaleX(0.8333);transform-origin:0 0;left:291.5px;top:917.5px"><span style="color:#1a1a1a">        </span><span style="color:#008000;font-weight:bold">return</span><span style="color:#1a1a1a"> self.l3(h2)</span></div>
<div style="position:absolute;white-space:pre;font-family:'Liberation Mono',monospace;font-size:19px;line-height:22px;height:22px;transform:scaleX(0.8333);transform-origin:0 0;left:290.5px;top:378px;color:#000">label: 5</div>
<div class="abs" style="left:156px;top:955px;width:1228px;height:55px;border:1px solid #66bb6a;border-left:6px solid #66bb6a;border-radius:0 2px 2px 0;background:#fff"></div>
<div class="abs" style="left:283px;top:963px;width:1093px;height:39px;background:#f7f7f7;border:1px solid #cfcfcf;border-radius:2px"></div>
<div style="position:absolute;white-space:pre;font-family:'Liberation Mono',monospace;font-size:19px;line-height:22px;height:22px;transform:scaleX(0.8333);transform-origin:0 0;left:208.5px;top:971.5px;color:#303f9f">In [ ]:</div>
<div class="abs" style="left:291.5px;top:972px;width:1.3px;height:22px;background:#000"></div>
<div class="abs" style="left:1527px;top:271px;width:27px;height:758px;background:#f0f0f0"></div>
<div class="abs" style="left:1529px;top:637px;width:21px;height:309px;background:#c1c1c1"></div>
<svg class="abs" style="left:1527px;top:271px" width="27" height="758"><path d="M7 16 L12.5 10 L18 16Z" fill="#505050"/><path d="M7 741 L12.5 747 L18 741Z" fill="#505050"/></svg>
<div class="abs" style="left:10px;top:1029px;width:1546px;height:2px;background:#a9a9a9"></div>
<div class="abs" style="left:0;top:0;width:1564px;height:1040px;border:1px solid #b6b6b6"></div>
</body></html>
